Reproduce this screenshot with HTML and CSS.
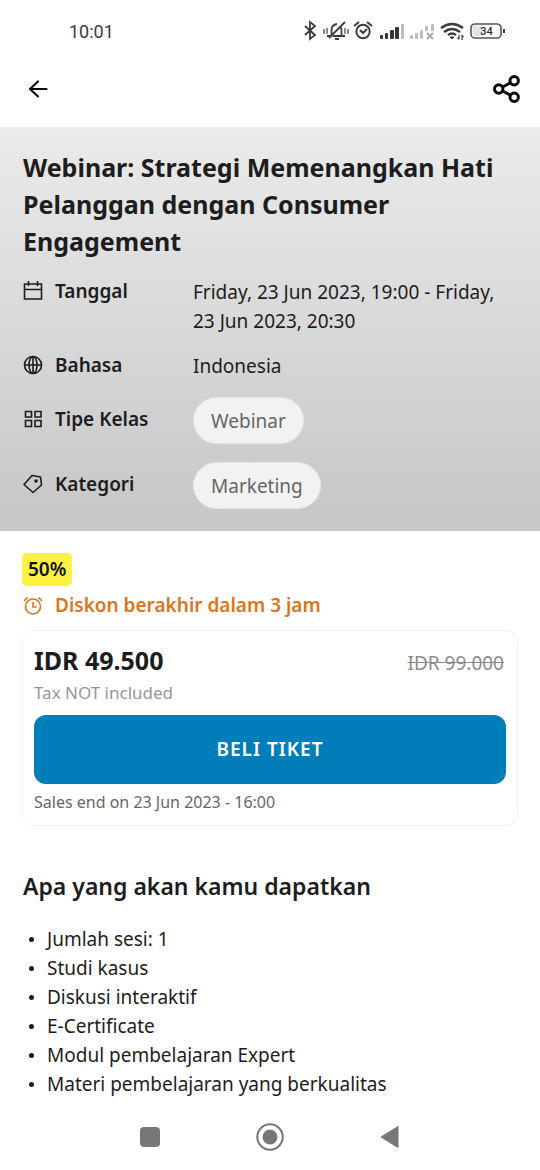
FILE: index.html
```html
<!DOCTYPE html>
<html lang="id">
<head>
<meta charset="utf-8">
<meta name="viewport" content="width=device-width, initial-scale=1">
<title>Webinar</title>
<link rel="stylesheet" href="styles.css">
</head>
<body>
<div class="screen">
  <div class="status">
    <span class="clock">10:01</span>
    <svg class="status-icons" width="204" height="24" viewBox="0 0 204 24" fill="none" stroke="#3c3c3c" stroke-width="2">
      <path d="M3 7l10 9-5 4V3l5 4-10 9" stroke-width="1.8"/>
      <path d="M25 17h4.500V11q0-5 5.500-6M38 7q1.500 2 1.500 4v6H43M31 17h8M33 20h4M43 3L27 19" stroke-width="1.8"/>
      <path d="M22 10v5M25 9v6M43 9v6M46 10v5" stroke-width="1.2"/>
      <circle cx="61" cy="12.500" r="6.700"/><path d="M58 11l3 3 4-4M52 7l5-4M65 3l5 4"/>
      <g stroke="none" fill="#353535"><rect x="78" y="16" width="3" height="4" rx="1"/><rect x="83" y="14" width="3" height="6" rx="1"/><rect x="88" y="11" width="4" height="9" rx="1"/><rect x="93" y="8" width="4" height="12" rx="1"/></g>
      <g stroke="none" fill="#bdbdbd"><rect x="99" y="5" width="3" height="15" rx="1"/><rect x="108" y="16" width="3" height="4" rx="1"/><rect x="113" y="14" width="3" height="6" rx="1"/><rect x="118" y="11" width="3" height="9" rx="1"/><rect x="123" y="7" width="3" height="5" rx="1"/><rect x="129" y="5" width="3" height="7" rx="1"/></g>
      <path d="M125 14l6 6M131 14l-6 6" stroke="#aaa"/>
      <path d="M139 9q11-8 22 0M142 13q8-6 16 0M146 16q4-3 8 0" stroke-width="2.500"/>
      <path d="M148 18h4l-2 2z" fill="#3c3c3c" stroke-width="1"/>
      <path d="M157 16v4M160 16v5M155.500 18.500l1.500 2M160 16l1.500 2" stroke-width="1.200"/>
      <rect x="169" y="5" width="30" height="14" rx="4" stroke="#555" stroke-width="1.600"/>
      <path d="M171 7h9v10h-7q-2 0-2-2z" fill="#e2e2e2" stroke="none"/>
      <path d="M202 10v4" stroke="#444"/>
      <text x="184.500" y="16" class="battery-text">34</text>
    </svg>
  </div>

  <header class="toolbar">
    <button class="icon-button" type="button" aria-label="Kembali">
      <svg width="20" height="20" viewBox="0 0 20 20" fill="none" stroke="#0a0a0a" stroke-width="2.200" stroke-linecap="round" stroke-linejoin="round"><path d="M18.500 10H2M10 2.500L2 10l8 7.500"/></svg>
    </button>
    <button class="icon-button" type="button" aria-label="Bagikan">
      <svg width="28" height="28" viewBox="0 0 28 28" fill="none" stroke="#0a0a0a" stroke-width="3"><circle cx="5.700" cy="14" r="4.200"/><circle cx="21.200" cy="5.700" r="4.200"/><circle cx="21.200" cy="22.300" r="4.200"/><path d="M9.500 12l8-4.300M9.500 16l8 4.300"/></svg>
    </button>
  </header>

  <main>
    <section class="hero">
      <h1 class="title">Webinar: Strategi Memenangkan Hati Pelanggan dengan Consumer Engagement</h1>
      <dl class="facts">
        <div class="fact">
          <dt class="label"><svg class="icon" viewBox="0 0 20 20"><path d="M1.500 3h17v15h-17zM1.500 8.500h17M5.500 0v5M14.500 0v5"/></svg>Tanggal</dt>
          <dd class="value">Friday, 23 Jun 2023, 19:00 - Friday, 23 Jun 2023, 20:30</dd>
        </div>
        <div class="fact">
          <dt class="label"><svg class="icon" viewBox="0 0 20 20"><circle cx="10" cy="10" r="8.500"/><ellipse cx="10" cy="10" rx="4" ry="8.500"/><path d="M1.500 10h17M10 1.500v17"/></svg>Bahasa</dt>
          <dd class="value">Indonesia</dd>
        </div>
        <div class="fact fact-chip">
          <dt class="label"><svg class="icon" viewBox="0 0 20 20"><path d="M2.500 2.500H8.500v5.500H2.500zM12 2.500h6v5.500H12zM2.500 11.500H8.500v6H2.500zM12 11.500h6v6H12z"/></svg>Tipe Kelas</dt>
          <dd class="value"><span class="chip">Webinar</span></dd>
        </div>
        <div class="fact fact-chip">
          <dt class="label"><svg class="icon" viewBox="0 0 20 20"><path d="M1 10.500L9 1.500l8.500 1.500 1 8L10 18.500z" stroke-linejoin="round"/><circle cx="13" cy="7" r="1.800" class="dot"/></svg>Kategori</dt>
          <dd class="value"><span class="chip">Marketing</span></dd>
        </div>
      </dl>
    </section>

    <section class="offer">
      <span class="discount">50%</span>
      <p class="deadline"><svg class="icon" viewBox="0 0 20 20"><circle cx="10" cy="10.500" r="7.500"/><path d="M10 6v5h3.500M1 5l3.500-3.500M15.500 1.500L19 5"/></svg>Diskon berakhir dalam 3 jam</p>
      <div class="card">
        <div class="prices"><strong class="price">IDR 49.500</strong><s class="old-price">IDR 99.000</s></div>
        <p class="tax">Tax NOT included</p>
        <button class="buy" type="button">BELI TIKET</button>
        <p class="sales-end">Sales end on 23 Jun 2023 - 16:00</p>
      </div>
    </section>

    <section class="benefits">
      <h2 class="subtitle">Apa yang akan kamu dapatkan</h2>
      <ul class="list">
        <li>Jumlah sesi: 1</li>
        <li>Studi kasus</li>
        <li>Diskusi interaktif</li>
        <li>E-Certificate</li>
        <li>Modul pembelajaran Expert</li>
        <li>Materi pembelajaran yang berkualitas</li>
      </ul>
    </section>
  </main>

  <nav class="system-nav" aria-label="Navigasi sistem">
    <button class="nav-button" type="button" aria-label="Aplikasi terbaru"><svg width="28" height="28" viewBox="0 0 28 28"><rect x="4" y="4" width="20" height="20" rx="4" fill="#777"/></svg></button>
    <button class="nav-button" type="button" aria-label="Beranda"><svg width="28" height="28" viewBox="0 0 28 28"><circle cx="14" cy="14" r="12.700" fill="none" stroke="#777" stroke-width="2"/><circle cx="14" cy="14" r="7.500" fill="#777"/></svg></button>
    <button class="nav-button" type="button" aria-label="Kembali"><svg width="28" height="28" viewBox="0 0 28 28"><path d="M5 14L22 3.500v21z" fill="#777" stroke="#777" stroke-linejoin="round"/></svg></button>
  </nav>
</div>
</body>
</html>
```

FILE: styles.css
```css
* {
  box-sizing: border-box;
}

body {
  margin: 0;
  background: #fff;
  color: #1d1d1d;
  font-family: "Noto Sans", sans-serif;
  font-size: 19px;
  line-height: 29px;
}

h1, h2, p, dl, dd, ul {
  margin: 0;
  padding: 0;
}

button {
  border: 0;
  background: none;
  padding: 0;
  font: inherit;
  cursor: pointer;
}

.screen {
  display: flex;
  flex-direction: column;
  min-height: 100vh;
}

.status {
  display: flex;
  align-items: center;
  justify-content: space-between;
  height: 62px;
  padding: 0 34px 0 69px;
}

.clock {
  color: #3c3c3c;
  font-family: Roboto, sans-serif;
  font-size: 18px;
}

.battery-text {
  fill: #333;
  stroke: none;
  font: 500 11px Roboto, sans-serif;
  text-anchor: middle;
}

.toolbar {
  display: flex;
  align-items: center;
  justify-content: space-between;
  height: 65px;
  padding: 0 19px 12px 28px;
}

.icon-button, .nav-button {
  display: flex;
}

.hero {
  padding: 22px 23px;
  background: linear-gradient(#ebebeb, #c6c6c6);
}

.title {
  font-size: 25px;
  font-weight: 700;
  line-height: 37px;
}

.facts {
  display: flex;
  flex-direction: column;
  gap: 16px;
  margin-top: 18px;
}

.fact {
  display: grid;
  grid-template-columns: 170px 1fr;
  align-items: start;
}

.fact-chip {
  align-items: center;
}

.fact-chip + .fact-chip {
  margin-top: 2px;
}

.label, .deadline {
  display: flex;
  align-items: center;
  gap: 12px;
  font-weight: 600;
}

.label {
  line-height: 26px;
}

.fact-chip .label {
  padding-bottom: 4px;
}

.icon {
  width: 20px;
  height: 20px;
  fill: none;
  stroke: currentColor;
  stroke-width: 1.6;
}

.dot {
  fill: currentColor;
  stroke: none;
}

.chip {
  display: block;
  width: fit-content;
  padding: 9px 17px 8px;
  border: 1px solid #e6e6e6;
  border-radius: 24px;
  background: #f2f2f2;
  color: #666;
  line-height: 28px;
}

.offer {
  padding: 22px 22px 0;
}

.discount {
  display: block;
  width: fit-content;
  padding: 2px 6px;
  border-radius: 5px;
  background: #fff044;
  color: #111;
  font-weight: 600;
}

.deadline {
  margin-top: 5px;
  padding-left: 1px;
  color: #dc751c;
}

.card {
  margin-top: 10px;
  padding: 15px 11px 8px;
  border: 1px solid #f2f2f2;
  border-radius: 12px;
}

.prices {
  display: flex;
  align-items: baseline;
  justify-content: space-between;
  padding-right: 2px;
}

.price {
  font-size: 25px;
  font-weight: 700;
}

.old-price {
  color: #8c8c8c;
}

.tax {
  color: #969696;
  font-size: 17px;
}

.buy {
  display: block;
  width: 100%;
  height: 69px;
  margin-top: 8px;
  border-radius: 12px;
  background: #007eb9;
  color: #fff;
  font-weight: 600;
  letter-spacing: 1px;
}

.sales-end {
  margin-top: 4px;
  color: #666;
  font-size: 16px;
}

.benefits {
  padding: 42px 23px 0;
}

.subtitle {
  font-size: 23px;
  font-weight: 600;
  line-height: 37px;
}

.list {
  margin-top: 20px;
  list-style: none;
}

.list li {
  display: flex;
  align-items: center;
  gap: 13px;
  padding-left: 6px;
}

.list li::before {
  width: 5px;
  height: 5px;
  border-radius: 50%;
  background: currentColor;
  content: "";
}

.system-nav {
  display: flex;
  align-items: center;
  justify-content: center;
  gap: 92px;
  margin-top: auto;
  height: 66px;
}
```
